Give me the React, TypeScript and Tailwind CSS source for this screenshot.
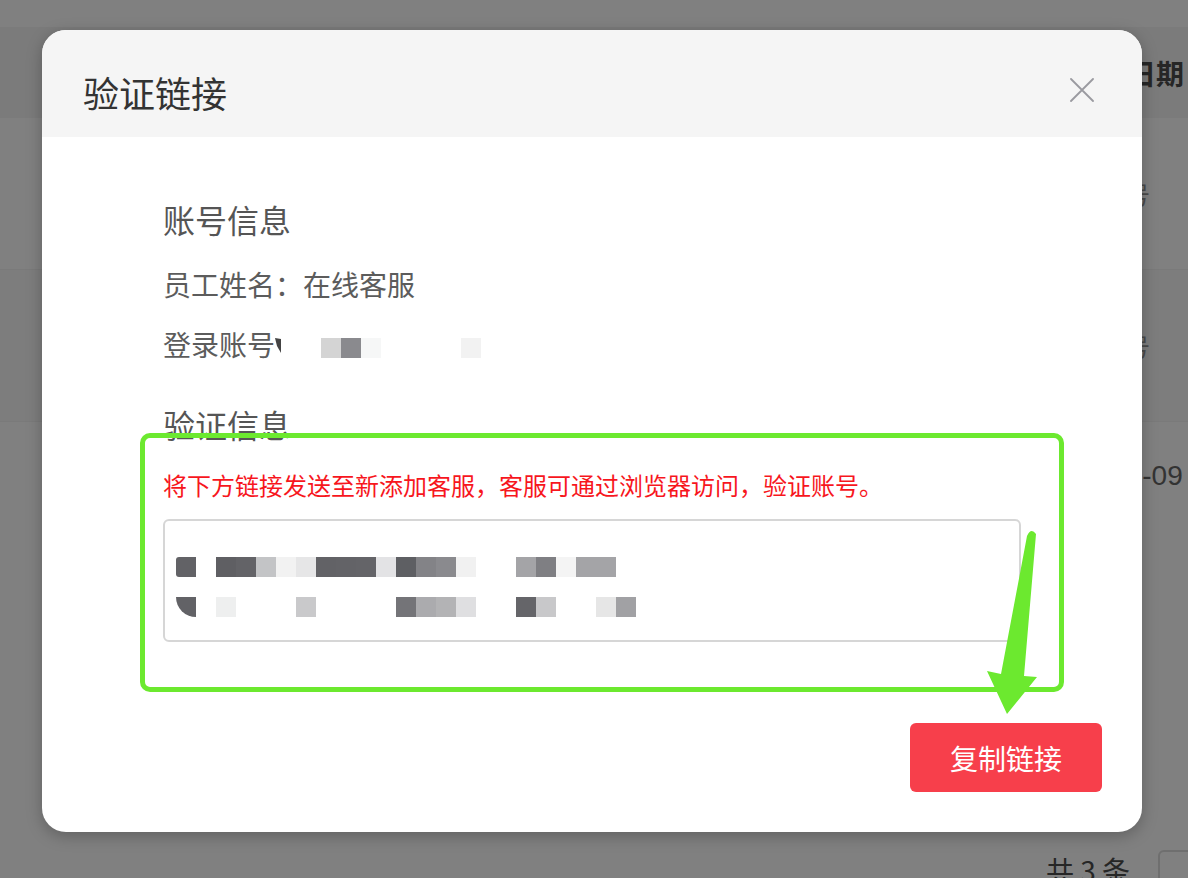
import React from 'react';

// blurred link text: each cell is 20px, empty string = gap
const linkRow1 = [
  'bg-[#626266] rounded-l-[3px]', '', 'bg-[#5f5f63]', 'bg-[#636367]', 'bg-[#c3c4c6]', 'bg-[#f2f2f2]', 'bg-[#e6e6e7]',
  'bg-[#626266]', 'bg-[#636367]', 'bg-[#646468]', 'bg-[#e3e3e5]', 'bg-[#5e5f63]', 'bg-[#838387]', 'bg-[#8a8a8e]',
  'bg-[#f1f1f1]', '', '', 'bg-[#a4a4a7]', 'bg-[#7f7f83]', 'bg-[#f4f4f4]', 'bg-[#a4a4a7]', 'bg-[#a4a4a7]',
];
const linkRow2 = [
  'bg-[#626266] rounded-bl-[20px]', '', 'bg-[#eeefef]', '', '', '', 'bg-[#c9c9cb]', '', '', '', '',
  'bg-[#747478]', 'bg-[#ababae]', 'bg-[#b3b3b5]', 'bg-[#dfdfe1]', '', '', 'bg-[#656569]', 'bg-[#c8c8ca]',
  '', '', 'bg-[#e6e6e6]', 'bg-[#a1a1a4]',
];
const accountCells = ['bg-[#d4d4d4]', 'bg-[#8a8a8e]', 'bg-[#f6f7f7]', '', '', '', '', 'bg-[#f2f2f2]'];

const Cells: React.FC<{ cells: string[] }> = ({ cells }) => (
  <div className="flex">
    {cells.map((c, i) => (
      <div key={i} className={`w-[20px] h-[20px] ${c}`} />
    ))}
  </div>
);

const App: React.FC = () => {
  return (
    <div className="relative w-[1188px] h-[878px] overflow-hidden bg-[#808080] font-['Noto_Sans_CJK_SC','Noto_Sans',sans-serif]">
      {/* page behind the mask */}
      <div className="flex flex-col">
        <div className="h-[27px] bg-[#808080]" />
        <div className="h-[91px] bg-[#7b7b7b] flex items-center pl-[1128px] whitespace-nowrap">
          <span className="text-[28px] font-bold text-[#262626] leading-none">日期</span>
        </div>
        <div className="h-[152px] bg-[#808080] border-b border-[#7a7a7a] flex items-center pl-[1102px] whitespace-nowrap">
          <span className="text-[24px] text-[#4a4a4a] leading-none">账号</span>
        </div>
        <div className="h-[152px] bg-[#7d7d7d] border-b border-[#7a7a7a] flex items-center pl-[1102px] whitespace-nowrap">
          <span className="text-[24px] text-[#4a4a4a] leading-none">账号</span>
        </div>
        <div className="h-[150px] bg-[#808080] pt-[40px] pl-[1080px] whitespace-nowrap">
          <span className="text-[28px] text-[#333] leading-none font-['Liberation_Sans',sans-serif]">2021-09</span>
        </div>
        <div className="flex items-start pl-[1046px] pt-[284px]">
          <span className="text-[28px] text-[#262626] leading-none whitespace-nowrap">共 3 条</span>
        </div>
      </div>
      <div className="absolute left-[1158px] top-[850px] w-[60px] h-[40px] rounded-[6px] border-2 border-[#6f6f6f]" />

      {/* dialog */}
      <div className="absolute left-[42px] top-[30px] w-[1100px] h-[802px] bg-white rounded-[24px] overflow-hidden shadow-[0_4px_16px_rgba(0,0,0,0.25)] flex flex-col">
        <div className="h-[107px] bg-[#f5f5f5] flex items-start justify-between pl-[41px] pr-[48px] shrink-0">
          <div className="text-[36px] leading-none text-[#333] mt-[44px]">验证链接</div>
          <svg width="24" height="24" viewBox="0 0 24 24" className="mt-[48px]">
            <path d="M1 1 L23 23 M23 1 L1 23" stroke="#9a9aa0" strokeWidth="1.8" strokeLinecap="round" />
          </svg>
        </div>

        <div className="flex flex-col pl-[121px] pr-[121px]">
          <div className="mt-[66px] text-[32px] leading-none text-[#555]">账号信息</div>
          <div className="mt-[35px] text-[28px] leading-none text-[#5c5c5c]">员工姓名：在线客服</div>
          <div className="mt-[32px] flex items-start">
            <span className="text-[28px] leading-none text-[#5c5c5c]">登录账号</span>
            <svg width="8" height="16" viewBox="0 0 8 16" className="mt-[8px]">
              <path d="M0 0 L6 1 L6 15 L2 8 Z" fill="#444" />
            </svg>
            <div className="ml-[38px] mt-[8px]">
              <Cells cells={accountCells} />
            </div>
          </div>
          <div className="mt-[50px] text-[32px] leading-none text-[#555]">验证信息</div>
          <div className="mt-[33px] text-[24px] leading-none text-[#f7161d]">
            将下方链接发送至新添加客服，客服可通过浏览器访问，验证账号。
          </div>
          <div className="mt-[22px] h-[123px] border-2 border-[#d6d6d6] rounded-[6px] pl-[11px] pt-[36px] flex flex-col gap-[20px]">
            <Cells cells={linkRow1} />
            <Cells cells={linkRow2} />
          </div>
        </div>

        <div className="flex justify-end pr-[40px] mt-[81px]">
          <button className="w-[192px] h-[69px] rounded-[6px] bg-[#f73f4b] text-white text-[28px] leading-none">
            复制链接
          </button>
        </div>
      </div>

      {/* annotation */}
      <div className="absolute left-[140px] top-[433px] w-[924px] h-[259px] border-[5px] border-[#6ce92f] rounded-[10px]" />
      <svg className="absolute left-0 top-0" width="1188" height="878" viewBox="0 0 1188 878">
        <path
          d="M1027 536 Q1031 527 1036 534 L1024 676 L1037 677 L1007 714 L987 671 L1001 674 Z"
          fill="#6ce92f"
        />
      </svg>
    </div>
  );
};

export default App;
